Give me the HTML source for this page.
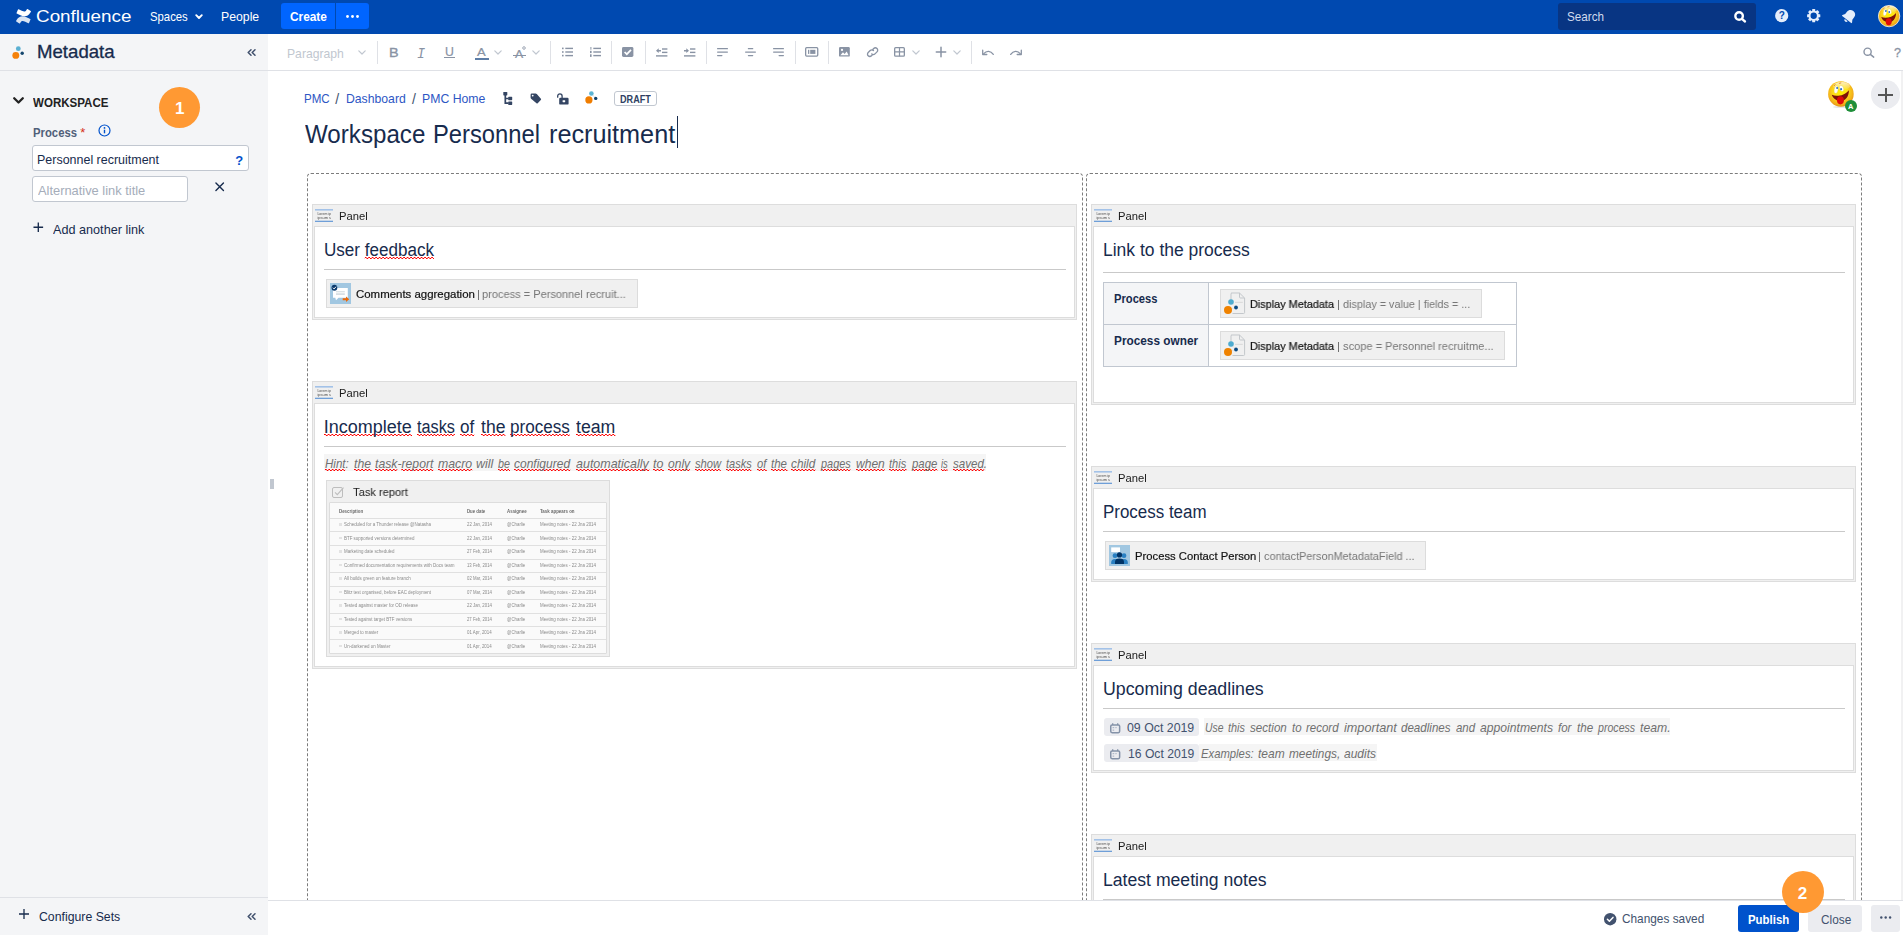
<!DOCTYPE html>
<html lang="en">
<head>
<meta charset="utf-8">
<title>Workspace Personnel recruitment</title>
<style>
*{box-sizing:border-box;margin:0;padding:0}
html,body{width:1903px;height:935px;overflow:hidden;background:#fff}
body{position:relative;font-family:"Liberation Sans",sans-serif;font-size:12.6px;color:#172b4d}
.abs{position:absolute}
.t{position:absolute;white-space:pre;line-height:1}
svg{position:absolute;overflow:visible}
#nav{position:absolute;left:0;top:0;width:1903px;height:34px;background:#0049b0}
#side{position:absolute;left:0;top:34px;width:268px;height:901px;background:#f4f5f7}
#tb{position:absolute;left:268px;top:34px;width:1635px;height:37px;background:#fff;border-bottom:1px solid #dfe1e6}
#bot{position:absolute;left:268px;top:900px;width:1635px;height:35px;background:#fff;border-top:1px solid #dfe1e6}
.sq,.sq2{background-image:linear-gradient(90deg,#f00 50%,rgba(255,0,0,0) 50%),linear-gradient(90deg,rgba(255,0,0,0) 50%,#f00 50%);background-size:3.7px 1.3px,3.7px 1.3px;background-repeat:repeat-x}
.sq{background-position:0 calc(100% - 2px),0 calc(100% - 1px)}
.sq2{background-position:0 calc(100% - 1px),0 100%}
</style>
</head>
<body>
<div id="nav">
<svg style="left:15.5px;top:8.5px" width="15" height="14.5" viewBox="0 0 32 31"><path fill="#fff" d="M1.2 23.6c-.3.5-.7 1.200-1 1.700a1 1 0 0 0 .35 1.400l6.700 4.100a1 1 0 0 0 1.400-.34c.27-.45.600-1 1-1.650 2.650-4.400 5.300-3.850 10.100-1.550l6.650 3.150a1 1 0 0 0 1.350-.5l3.200-7.200a1 1 0 0 0-.5-1.300c-1.400-.66-4.200-1.980-6.700-3.200C14.600 13.900 6.900 14.200 1.200 23.600z" opacity=".85"/><path fill="#fff" d="M30.800 7.400c.3-.5.700-1.200 1-1.700a1 1 0 0 0-.35-1.400L24.750.2a1 1 0 0 0-1.400.34c-.27.45-.6 1-1 1.650-2.650 4.400-5.300 3.850-10.100 1.550L5.600.6a1 1 0 0 0-1.350.5L1.050 8.300a1 1 0 0 0 .5 1.300c1.400.66 4.200 1.980 6.700 3.200 9.150 4.300 16.850 4 22.550-5.400z"/></svg>
<span class="t" style="left:36.20px;top:8.00px;font-size:17.3px;transform:scaleX(1.0920);transform-origin:0 0;color:#fff;">Confluence</span>
<span class="t" style="left:149.80px;top:11.00px;font-size:12.6px;transform:scaleX(0.8991);transform-origin:0 0;color:#fff;">Spaces</span>
<svg style="left:194.500px;top:14px" width="8" height="6" viewBox="0 0 8 6"><path d="M1.200 1.200 L4 4 L6.800 1.200" fill="none" stroke="#fff" stroke-width="1.900" stroke-linecap="round" stroke-linejoin="round"/></svg>
<span class="t" style="left:221.03px;top:11.00px;font-size:12.6px;transform:scaleX(0.9736);transform-origin:0 0;color:#fff;">People</span>
<div class="abs" style="left:281px;top:3px;width:54px;height:26px;background:#0065ff;border-radius:3px 0 0 3px"></div>
<div class="abs" style="left:336px;top:3px;width:33px;height:26px;background:#0065ff;border-radius:0 3px 3px 0"></div>
<span class="t" style="left:289.80px;top:11.00px;font-size:12.6px;font-weight:bold;transform:scaleX(0.9414);transform-origin:0 0;color:#fff;">Create</span>
<svg style="left:346px;top:14.5px" width="13" height="3" viewBox="0 0 13 3"><circle cx="1.5" cy="1.5" r="1.4" fill="#fff"/><circle cx="6.5" cy="1.5" r="1.4" fill="#fff"/><circle cx="11.5" cy="1.5" r="1.4" fill="#fff"/></svg>
<div class="abs" style="left:1558px;top:3px;width:198px;height:26.5px;background:#083583;border-radius:3px"></div>
<span class="t" style="left:1567.00px;top:11.00px;font-size:12.6px;transform:scaleX(0.9273);transform-origin:0 0;color:#d0dbee;">Search</span>
<svg style="left:1733px;top:10px" width="14" height="14" viewBox="0 0 14 14"><circle cx="6.100" cy="6.060" r="3.750" fill="none" stroke="#fff" stroke-width="2.400"/><path d="M8.900 8.900 L12 11.500" stroke="#fff" stroke-width="2.300" stroke-linecap="round"/></svg>
<svg style="left:1774.500px;top:9.200px" width="13.400" height="13.400" viewBox="0 0 13.400 13.400"><circle cx="6.700" cy="6.700" r="6.600" fill="#e4edfb"/><text x="6.700" y="10.300" text-anchor="middle" font-family="Liberation Sans, sans-serif" font-weight="bold" font-size="10" fill="#0049b0">?</text></svg>
<svg style="left:1807px;top:9.300px" width="13.400" height="13.400" viewBox="-6.700 -6.700 13.400 13.400"><circle r="4.200" fill="none" stroke="#e4edfb" stroke-width="2"/><g fill="#e4edfb"><rect x="-1.500" y="-6.600" width="3" height="3" rx=".5" transform="rotate(0)"/><rect x="-1.500" y="-6.600" width="3" height="3" rx=".5" transform="rotate(45)"/><rect x="-1.500" y="-6.600" width="3" height="3" rx=".5" transform="rotate(90)"/><rect x="-1.500" y="-6.600" width="3" height="3" rx=".5" transform="rotate(135)"/><rect x="-1.500" y="-6.600" width="3" height="3" rx=".5" transform="rotate(180)"/><rect x="-1.500" y="-6.600" width="3" height="3" rx=".5" transform="rotate(225)"/><rect x="-1.500" y="-6.600" width="3" height="3" rx=".5" transform="rotate(270)"/><rect x="-1.500" y="-6.600" width="3" height="3" rx=".5" transform="rotate(315)"/></g></svg>
<svg style="left:1841.500px;top:8.800px" width="14.500" height="14.500" viewBox="0 0 15 15"><g transform="rotate(38 7.500 7.500)" fill="#e4edfb"><path d="M7.500 .6c-2.900 0-4.700 2-4.700 4.700v3L1.200 10.800v1h12.600v-1L12.200 8.300v-3c0-2.700-1.800-4.700-4.700-4.700z"/><path d="M5.600 12.600a1.900 1.900 0 0 0 3.800 0z"/></g></svg>
<svg style="left:1877.80px;top:4.80px" width="22.2" height="22.2" viewBox="0 0 40 40"><defs><radialGradient id="ga" cx="48%" cy="42%" r="60%"><stop offset="0" stop-color="#fff200"/><stop offset=".45" stop-color="#fde01a"/><stop offset=".8" stop-color="#f4b21a"/><stop offset="1" stop-color="#e08a14"/></radialGradient><linearGradient id="gah" x1="0" y1="0" x2="0" y2="1"><stop offset="0" stop-color="#fff" stop-opacity=".75"/><stop offset="1" stop-color="#fff" stop-opacity="0"/></linearGradient></defs><circle cx="20" cy="20" r="19.3" fill="url(#ga)" stroke="#fff" stroke-width="1.300"/><ellipse cx="21" cy="8" rx="13" ry="6.500" fill="url(#gah)"/><ellipse cx="12.600" cy="13.400" rx="3" ry="5.800" fill="#fff" stroke="#d9b43a" stroke-width=".4" transform="rotate(10 12.600 13.400)"/><ellipse cx="21" cy="11.500" rx="3.100" ry="4.800" fill="#fff" stroke="#d9b43a" stroke-width=".4" transform="rotate(-20 21 11.500)"/><circle cx="14.200" cy="10.800" r="1.600" fill="#2f6fc4"/><circle cx="20.300" cy="12.600" r="1.600" fill="#2f6fc4"/><path d="M9.500 7.500 L11 5.500 M17.500 3.600 L20 3" stroke="#e0701a" stroke-width="1.200" stroke-linecap="round"/><path d="M5.800 21.500 C13 24.500 25.500 23 32.500 14.200 C32.500 24 27 31 19.500 31 C12 31 7.500 26.500 5.800 21.500z" fill="#7d1208"/><ellipse cx="19.300" cy="30" rx="5.400" ry="6.300" fill="#de0a0a"/></svg>
</div>
<div id="side"></div>
<svg style="left:12px;top:46px" width="12.5" height="13.0" viewBox="0 0 12.5 13"><circle cx="3.800" cy="9.400" r="3.450" fill="#f5820b"/><circle cx="6.300" cy="2.700" r="2.400" fill="#5ab0d2"/><circle cx="10.200" cy="7.300" r="1.700" fill="#14466e"/></svg>
<span class="t" style="left:36.85px;top:44.00px;font-size:17.8px;transform:scaleX(1.0471);transform-origin:0 0;color:#172b4d;-webkit-text-stroke:0.3px;">Metadata</span>
<svg style="left:247px;top:48.5px" width="9" height="7" viewBox="0 0 9 7"><path d="M4 .7 L1.200 3.500 L4 6.300 M8 .7 L5.200 3.500 L8 6.300" fill="none" stroke="#42526e" stroke-width="1.500" stroke-linecap="round" stroke-linejoin="round"/></svg>
<div class="abs" style="left:0px;top:70px;width:268px;height:1px;background:#dfe1e6"></div>
<svg style="left:12.5px;top:96.5px" width="11" height="7" viewBox="0 0 11 7"><path d="M1.200 1.200 L5.500 5.500 L9.800 1.200" fill="none" stroke="#222" stroke-width="2.300" stroke-linecap="round" stroke-linejoin="round"/></svg>
<span class="t" style="left:32.80px;top:96.00px;font-size:13.5px;font-weight:bold;transform:scaleX(0.8556);transform-origin:0 0;color:#222;">WORKSPACE</span>
<div class="abs" style="left:158.8px;top:86.7px;width:41.6px;height:41.6px;background:#ff9933;border-radius:50%"></div>
<span class="t" style="left:175.00px;top:100.00px;font-size:17px;font-weight:bold;color:#fff;">1</span>
<span class="t" style="left:32.70px;top:127.00px;font-size:12.6px;font-weight:bold;transform:scaleX(0.8979);transform-origin:0 0;color:#505f79;">Process</span>
<span class="t" style="left:80.30px;top:126.00px;font-size:13px;color:#d6301a;">*</span>
<svg style="left:98.400px;top:123.500px" width="13" height="13" viewBox="0 0 13 13"><circle cx="6.5" cy="6.5" r="5.500" fill="none" stroke="#0052cc" stroke-width="1.200"/><circle cx="6.500" cy="3.900" r=".9" fill="#0052cc"/><path d="M6.500 5.700 V9.300" stroke="#0052cc" stroke-width="1.400"/></svg>
<div class="abs" style="left:32px;top:145px;width:217px;height:26px;background:#fff;border:1px solid #c1c7d0;border-radius:3px"></div>
<span class="t" style="left:37.01px;top:154.00px;font-size:12.6px;transform:scaleX(0.9903);transform-origin:0 0;color:#172b4d;">Personnel recruitment</span>
<span class="t" style="left:235.30px;top:154.00px;font-size:13px;font-weight:bold;color:#0052cc;">?</span>
<div class="abs" style="left:32px;top:176px;width:156px;height:26px;background:#fff;border:1px solid #c1c7d0;border-radius:3px"></div>
<span class="t" style="left:38.00px;top:185.00px;font-size:12.6px;transform:scaleX(1.0211);transform-origin:0 0;color:#a5adba;">Alternative link title</span>
<svg style="left:214.700px;top:182.300px" width="9.400" height="9.400" viewBox="0 0 10 10"><path d="M1 1 L9 9 M9 1 L1 9" stroke="#172b4d" stroke-width="1.500" stroke-linecap="round"/></svg>
<svg style="left:33px;top:221.800px" width="10.600" height="10.600" viewBox="0 0 11 11"><path d="M5.500 .5 V10.500 M.5 5.500 H10.500" stroke="#172b4d" stroke-width="1.400"/></svg>
<span class="t" style="left:53.30px;top:224.00px;font-size:12.6px;transform:scaleX(1.0042);transform-origin:0 0;color:#172b4d;">Add another link</span>
<div class="abs" style="left:0px;top:897px;width:268px;height:1px;background:#dfe1e6"></div>
<svg style="left:19px;top:909px" width="10" height="10" viewBox="0 0 10 10"><path d="M5 0 V10 M0 5 H10" stroke="#172b4d" stroke-width="1.300"/></svg>
<span class="t" style="left:38.50px;top:911.00px;font-size:12.6px;transform:scaleX(0.9746);transform-origin:0 0;color:#172b4d;">Configure Sets</span>
<svg style="left:247px;top:912.5px" width="9" height="7" viewBox="0 0 9 7"><path d="M4 .7 L1.200 3.500 L4 6.300 M8 .7 L5.200 3.500 L8 6.300" fill="none" stroke="#42526e" stroke-width="1.500" stroke-linecap="round" stroke-linejoin="round"/></svg>
<div class="abs" style="left:270.4px;top:479px;width:1.2px;height:10px;background:#c1c7d0"></div>
<div class="abs" style="left:272.4px;top:479px;width:1.2px;height:10px;background:#c1c7d0"></div>
<div id="tb"></div>
<span class="t" style="left:286.63px;top:48.00px;font-size:12.6px;transform:scaleX(0.9670);transform-origin:0 0;color:#c1c7d0;">Paragraph</span>
<svg style="left:358px;top:50px" width="8" height="5" viewBox="0 0 8 5"><path d="M.8 .8 L4 4 L7.200 .8" fill="none" stroke="#c1c7d0" stroke-width="1.200" stroke-linecap="round" stroke-linejoin="round"/></svg>
<div class="abs" style="left:377px;top:41px;width:1px;height:23px;background:#dfe1e6"></div>
<span class="t" style="left:388.73px;top:46.00px;font-size:13.4px;transform:scaleX(1.0750);transform-origin:0 0;color:#8993a4;-webkit-text-stroke:0.35px;">B</span>
<span class="t" style="left:417.40px;top:47.00px;font-size:14.2px;font-style:italic;transform:scaleX(0.9556);transform-origin:0 0;color:#8993a4;font-family:'Liberation Mono',monospace;">I</span>
<span class="t" style="left:445.00px;top:46.00px;font-size:12.6px;transform:scaleX(0.9778);transform-origin:0 0;color:#8993a4;-webkit-text-stroke:0.2px;">U</span>
<div class="abs" style="left:444.3px;top:56.7px;width:10.4px;height:1.2px;background:#8993a4"></div>
<span class="t" style="left:477.40px;top:46.00px;font-size:11.6px;transform:scaleX(1.1250);transform-origin:0 0;color:#8993a4;-webkit-text-stroke:0.2px;">A</span>
<div class="abs" style="left:475.2px;top:58px;width:13.6px;height:2px;background:#5d7da6"></div>
<svg style="left:494px;top:50px" width="8" height="5" viewBox="0 0 8 5"><path d="M.8 .8 L4 4 L7.200 .8" fill="none" stroke="#c1c7d0" stroke-width="1.200" stroke-linecap="round" stroke-linejoin="round"/></svg>
<span class="t" style="left:515.30px;top:49.00px;font-size:11px;transform:scaleX(1.1125);transform-origin:0 0;color:#8993a4;-webkit-text-stroke:0.2px;">A</span>
<div class="abs" style="left:512.9px;top:54.5px;width:12.8px;height:1px;background:#8993a4"></div>
<svg style="left:522px;top:46px" width="4" height="4" viewBox="0 0 4 4"><circle cx="2" cy="2" r="1.300" fill="none" stroke="#8993a4" stroke-width=".8"/></svg>
<svg style="left:532px;top:50px" width="8" height="5" viewBox="0 0 8 5"><path d="M.8 .8 L4 4 L7.200 .8" fill="none" stroke="#c1c7d0" stroke-width="1.200" stroke-linecap="round" stroke-linejoin="round"/></svg>
<div class="abs" style="left:550px;top:41px;width:1px;height:23px;background:#dfe1e6"></div>
<svg style="left:562px;top:47px" width="11" height="10" viewBox="0 0 11 10"><g fill="#8993a4"><rect x="0" y=".6" width="1.600" height="1.600"/><rect x="0" y="4.200" width="1.600" height="1.600"/><rect x="0" y="7.800" width="1.600" height="1.600"/><rect x="3.300" y=".7" width="7.700" height="1.400"/><rect x="3.300" y="4.300" width="7.700" height="1.400"/><rect x="3.300" y="7.900" width="7.700" height="1.400"/></g></svg>
<svg style="left:589.500px;top:47px" width="11" height="10" viewBox="0 0 11 10"><g fill="#8993a4"><rect x=".4" y="0" width="1" height="2.700"/><rect x="0" y="3.800" width="1.600" height="2.300"/><rect x="0" y="7.300" width="1.600" height="2.600"/><rect x="3.300" y=".7" width="7.700" height="1.400"/><rect x="3.300" y="4.300" width="7.700" height="1.400"/><rect x="3.300" y="7.900" width="7.700" height="1.400"/></g></svg>
<div class="abs" style="left:611px;top:41px;width:1px;height:23px;background:#dfe1e6"></div>
<svg style="left:622.400px;top:47px" width="11.400" height="10" viewBox="0 0 11.400 10"><rect x="0" y="0" width="11.400" height="10" rx="1.500" fill="#8993a4"/><path d="M2.600 5 L4.800 7.200 L9 2.800" fill="none" stroke="#fff" stroke-width="1.700"/></svg>
<div class="abs" style="left:645px;top:41px;width:1px;height:23px;background:#dfe1e6"></div>
<svg style="left:655.700px;top:47.500px" width="11.400" height="9.500" viewBox="0 0 11.400 9.500"><g fill="#8993a4"><rect x="6" y=".3" width="5.400" height="1.400"/><rect x="6" y="3.700" width="5.400" height="1.400"/><rect x="0" y="7.200" width="11.400" height="1.400"/><path d="M0 2.700 L2.700 .3 V1.950 H5 V3.450 H2.700 V5.100z"/></g></svg>
<svg style="left:683.500px;top:47.500px" width="11.400" height="9.500" viewBox="0 0 11.400 9.500"><g fill="#8993a4"><rect x="6" y=".3" width="5.400" height="1.400"/><rect x="6" y="3.700" width="5.400" height="1.400"/><rect x="0" y="7.200" width="11.400" height="1.400"/><path d="M5 2.700 L2.300 .3 V1.950 H0 V3.450 H2.300 V5.100z"/></g></svg>
<div class="abs" style="left:706px;top:41px;width:1px;height:23px;background:#dfe1e6"></div>
<svg style="left:717px;top:48px" width="11" height="9" viewBox="0 0 11 9"><g fill="#8993a4"><rect x="0" y="0" width="11" height="1.300" rx=".6"/><rect x="0" y="3.400" width="11" height="1.300" rx=".6"/><rect x="0" y="6.900" width="5.500" height="1.300" rx=".6"/></g></svg>
<svg style="left:745px;top:48px" width="11" height="9" viewBox="0 0 11 9"><g fill="#8993a4"><rect x="2.800" y="0" width="5.500" height="1.300" rx=".6"/><rect x="0" y="3.400" width="11" height="1.300" rx=".6"/><rect x="2.800" y="6.900" width="5.500" height="1.300" rx=".6"/></g></svg>
<svg style="left:773px;top:48px" width="11" height="9" viewBox="0 0 11 9"><g fill="#8993a4"><rect x="0" y="0" width="11" height="1.300" rx=".6"/><rect x="0" y="3.400" width="11" height="1.300" rx=".6"/><rect x="5.500" y="6.900" width="5.500" height="1.300" rx=".6"/></g></svg>
<div class="abs" style="left:795px;top:41px;width:1px;height:23px;background:#dfe1e6"></div>
<svg style="left:804.900px;top:47.300px" width="13.400" height="9.700" viewBox="0 0 13.400 9.700"><rect x=".65" y=".65" width="12.100" height="8.400" rx="1" fill="none" stroke="#8993a4" stroke-width="1.300"/><rect x="3" y="2.800" width="1.300" height="4.100" fill="#8993a4"/><rect x="5.200" y="2.800" width="5.200" height="4.100" fill="#8993a4"/></svg>
<div class="abs" style="left:828px;top:41px;width:1px;height:23px;background:#dfe1e6"></div>
<svg style="left:839.300px;top:47.300px" width="10.800" height="9.600" viewBox="0 0 10.800 9.600"><rect width="10.800" height="9.600" rx="1.200" fill="#8993a4"/><circle cx="3" cy="2.900" r="1.100" fill="#fff"/><path d="M1.300 8.200 L4 5.300 L5.600 6.900 L7.700 4.400 L9.600 8.200z" fill="#fff"/></svg>
<svg style="left:867.200px;top:47px" width="11.200" height="10.400" viewBox="0 0 11.200 10.400"><g fill="none" stroke="#8993a4" stroke-width="1.350" stroke-linecap="round"><path d="M4.700 6.900 a2.300 2.300 0 0 0 3.300 0 l2 -2 a2.300 2.300 0 0 0 -3.300 -3.300 l-.9 .9"/><path d="M6.500 3.500 a2.300 2.300 0 0 0 -3.300 0 l-2 2 a2.300 2.300 0 0 0 3.300 3.300 l.9 -.9"/></g></svg>
<svg style="left:894px;top:47.300px" width="11" height="9.800" viewBox="0 0 11 9.800"><rect x=".65" y=".65" width="9.700" height="8.500" rx="1" fill="none" stroke="#8993a4" stroke-width="1.300"/><path d="M5.500 .6 V9.200 M.6 4.900 H10.400" stroke="#8993a4" stroke-width="1.200"/></svg>
<svg style="left:912px;top:50px" width="8" height="5" viewBox="0 0 8 5"><path d="M.8 .8 L4 4 L7.200 .8" fill="none" stroke="#c1c7d0" stroke-width="1.200" stroke-linecap="round" stroke-linejoin="round"/></svg>
<svg style="left:936px;top:47.300px" width="10" height="10" viewBox="0 0 10 10"><path d="M5 .3 V9.700 M.3 5 H9.700" stroke="#8993a4" stroke-width="1.500" stroke-linecap="round"/></svg>
<svg style="left:953px;top:50px" width="8" height="5" viewBox="0 0 8 5"><path d="M.8 .8 L4 4 L7.200 .8" fill="none" stroke="#c1c7d0" stroke-width="1.200" stroke-linecap="round" stroke-linejoin="round"/></svg>
<div class="abs" style="left:971px;top:41px;width:1px;height:23px;background:#dfe1e6"></div>
<svg style="left:981.500px;top:48.500px" width="12" height="7" viewBox="0 0 12 7"><path d="M1.800 4.700 C4.500 1.400 8.600 1.600 11.300 5.400" fill="none" stroke="#8993a4" stroke-width="1.300" stroke-linecap="round"/><path d="M.7 1.200 V5.500 H4.800" fill="none" stroke="#8993a4" stroke-width="1.300" stroke-linecap="round" stroke-linejoin="round"/></svg>
<svg style="left:1009.500px;top:48.500px" width="12" height="7" viewBox="0 0 12 7"><path d="M10.200 4.700 C7.500 1.400 3.400 1.600 .7 5.400" fill="none" stroke="#8993a4" stroke-width="1.300" stroke-linecap="round"/><path d="M11.300 1.200 V5.500 H7.200" fill="none" stroke="#8993a4" stroke-width="1.300" stroke-linecap="round" stroke-linejoin="round"/></svg>
<svg style="left:1863px;top:46.500px" width="11.500" height="11" viewBox="0 0 11.500 11"><circle cx="4.600" cy="4.700" r="3.600" fill="none" stroke="#8993a4" stroke-width="1.400"/><path d="M7.300 7.400 L10.700 10.100" stroke="#8993a4" stroke-width="1.500" stroke-linecap="round"/></svg>
<span class="t" style="left:1894.30px;top:46.00px;font-size:13.6px;transform:scaleX(0.9250);transform-origin:0 0;color:#8993a4;-webkit-text-stroke:0.3px;">?</span>
<span class="t" style="left:303.88px;top:93.00px;font-size:12.6px;transform:scaleX(0.9185);transform-origin:0 0;color:#2d56c4;">PMC</span>
<span class="t" style="left:335.20px;top:92.00px;font-size:14px;color:#42526e;">/</span>
<span class="t" style="left:345.93px;top:93.00px;font-size:12.6px;transform:scaleX(0.9702);transform-origin:0 0;color:#2d56c4;">Dashboard</span>
<span class="t" style="left:411.90px;top:92.00px;font-size:14px;color:#42526e;">/</span>
<span class="t" style="left:421.73px;top:93.00px;font-size:12.6px;transform:scaleX(0.9739);transform-origin:0 0;color:#2d56c4;">PMC Home</span>
<svg style="left:503px;top:92.300px" width="9.500" height="13" viewBox="0 0 9.500 13"><g fill="#344563"><rect x=".3" y="0" width="4" height="3.400" rx=".6"/><rect x="5.200" y="4.800" width="4" height="3.400" rx=".6"/><rect x="5.200" y="9.500" width="4" height="3.400" rx=".6"/></g><path d="M2.300 3 V11.200 H5.500 M2.300 6.500 H5.500" fill="none" stroke="#344563" stroke-width="1.700"/></svg>
<svg style="left:529.500px;top:93.300px" width="11.500" height="11" viewBox="0 0 11.500 11"><path d="M.6 1.800 Q.6 .6 1.800 .6 L5.600 .6 Q6.300 .6 6.800 1.100 L10.900 5.700 Q11.400 6.300 10.800 6.900 L7.700 10.300 Q7.100 10.900 6.500 10.300 L1.100 5.800 Q.6 5.300 .6 4.600z" fill="#344563"/><circle cx="2.700" cy="2.600" r=".9" fill="#fff"/></svg>
<svg style="left:557px;top:92.800px" width="11.700" height="11.700" viewBox="0 0 11.700 11.700"><rect x="2.200" y="4.800" width="9.400" height="6.800" rx="1.200" fill="#344563"/><rect x="5.600" y="7.200" width="2.600" height="2" rx=".4" fill="#fff"/><path d="M.7 4.200 V3 a2.200 2.200 0 0 1 4.400 0 V5" fill="none" stroke="#344563" stroke-width="1.300" stroke-linecap="round"/></svg>
<svg style="left:584px;top:91px" width="14" height="13" viewBox="0 0 14 13"><path d="M7.400 2.500 L11.700 7.400" stroke="#b7d6e4" stroke-width=".6"/><circle cx="4.900" cy="8.900" r="3.600" fill="#f07d00"/><circle cx="7.400" cy="2.500" r="2.300" fill="#5ab4d4"/><circle cx="11.700" cy="7.400" r="1.700" fill="#0f4069"/></svg>
<div class="abs" style="left:614px;top:91px;width:43px;height:15px;background:#fff;border:1px solid #c1c7d0;border-radius:3px"></div>
<span class="t" style="left:620.10px;top:95.00px;font-size:10px;font-weight:bold;transform:scaleX(0.9090);transform-origin:0 0;color:#2f3f63;">DRAFT</span>
<span class="t" style="left:304.50px;top:122.00px;font-size:25.6px;transform:scaleX(0.9434);transform-origin:0 0;color:#172b4d;">Workspace</span><span class="t" style="left:433.44px;top:122.00px;font-size:25.6px;transform:scaleX(0.9277);transform-origin:0 0;color:#172b4d;">Personnel</span><span class="t" style="left:548.61px;top:122.00px;font-size:25.6px;transform:scaleX(0.9859);transform-origin:0 0;color:#172b4d;">recruitment</span>
<div class="abs" style="left:677.3px;top:116px;width:1.2px;height:32px;background:#172b4d"></div>
<div class="abs" style="left:1833px;top:105.5px;width:15px;height:2px;background:#e6e6e6;border-radius:50%"></div>
<svg style="left:1827.60px;top:81.00px" width="25.8" height="25.8" viewBox="0 0 40 40"><defs><radialGradient id="gb" cx="48%" cy="42%" r="60%"><stop offset="0" stop-color="#fff200"/><stop offset=".45" stop-color="#fde01a"/><stop offset=".8" stop-color="#f4b21a"/><stop offset="1" stop-color="#e08a14"/></radialGradient><linearGradient id="gbh" x1="0" y1="0" x2="0" y2="1"><stop offset="0" stop-color="#fff" stop-opacity=".75"/><stop offset="1" stop-color="#fff" stop-opacity="0"/></linearGradient></defs><circle cx="20" cy="20" r="19.8" fill="url(#gb)"/><ellipse cx="21" cy="8" rx="13" ry="6.500" fill="url(#gbh)"/><ellipse cx="12.600" cy="13.400" rx="3" ry="5.800" fill="#fff" stroke="#d9b43a" stroke-width=".4" transform="rotate(10 12.600 13.400)"/><ellipse cx="21" cy="11.500" rx="3.100" ry="4.800" fill="#fff" stroke="#d9b43a" stroke-width=".4" transform="rotate(-20 21 11.500)"/><circle cx="14.200" cy="10.800" r="1.600" fill="#2f6fc4"/><circle cx="20.300" cy="12.600" r="1.600" fill="#2f6fc4"/><path d="M9.500 7.500 L11 5.500 M17.500 3.600 L20 3" stroke="#e0701a" stroke-width="1.200" stroke-linecap="round"/><path d="M5.800 21.500 C13 24.500 25.500 23 32.500 14.200 C32.500 24 27 31 19.500 31 C12 31 7.500 26.500 5.800 21.500z" fill="#7d1208"/><ellipse cx="19.300" cy="30" rx="5.400" ry="6.300" fill="#de0a0a"/></svg>
<div class="abs" style="left:1845px;top:99.9px;width:12.2px;height:12.2px;background:#1f8f3a;border-radius:50%"></div>
<span class="t" style="left:1848.20px;top:103.00px;font-size:8px;font-weight:bold;transform:scaleX(0.9333);transform-origin:0 0;color:#fff;">A</span>
<div class="abs" style="left:1871.2px;top:80.1px;width:28.7px;height:28.7px;background:#ebecf0;border-radius:50%"></div>
<svg style="left:1878px;top:88px" width="15" height="14" viewBox="0 0 15 14"><path d="M8 0 V14 M0 7 H15" stroke="#555" stroke-width="2"/></svg>
<div class="abs" style="left:1901px;top:71px;width:2px;height:829px;background:#f1f1f2"></div>
<div class="abs" style="left:307px;top:173px;width:776px;height:740px;border:1px dashed #7c7c7c;border-radius:4px"></div>
<div class="abs" style="left:1086px;top:173px;width:776px;height:740px;border:1px dashed #7c7c7c;border-radius:4px"></div>
<div class="abs" style="left:312px;top:204px;width:765px;height:116px;background:#f0f0f0;border:1px solid #ddd"></div><div class="abs" style="left:314px;top:226px;width:761px;height:92px;background:#fff;border:1px solid #ddd"></div><svg style="left:315px;top:209px;will-change:transform" width="18" height="13" viewBox="0 0 18 13"><rect x="0" y="0" width="18" height="1.600" fill="#a3c2e8"/><rect x="0" y="11.700" width="18" height="1.300" fill="#6f9fd8"/><g font-family="Liberation Sans, sans-serif" font-size="3.900" fill="#4a4a4a"><text x="2.400" y="5.700" textLength="13.600" lengthAdjust="spacingAndGlyphs">Lorem ip</text><text x="2.400" y="10.100" textLength="13.600" lengthAdjust="spacingAndGlyphs">ipsum s</text></g></svg><span class="t" style="left:339.00px;top:211.00px;font-size:10.8px;transform:scaleX(1.0398);transform-origin:0 0;color:#1a1a1a;will-change:transform;">Panel</span>
<span class="t" style="left:324.05px;top:241.00px;font-size:18px;transform:scaleX(0.9478);transform-origin:0 0;color:#172b4d;">User <span class="sq">feedback</span></span>
<div class="abs" style="left:324px;top:269px;width:742px;height:1px;background:#c9c9c9"></div>
<div class="abs" style="left:326px;top:279px;width:312px;height:29px;background:#f0f0f0;border:1px solid #dcdcdc"></div><svg style="left:330px;top:283px" width="21" height="21" viewBox="0 0 21 21"><rect width="21" height="21" fill="#a1c7e1"/><path d="M3 5 H17.800 V14.800 H8.500 L6 17.200 L5.300 14.800 H3z" fill="#fff"/><rect x="6" y="8.200" width="8.800" height="1.100" fill="#d3dce1"/><rect x="6" y="10.300" width="8.800" height="1.600" fill="#d3dce1"/><circle cx="4.400" cy="4.750" r="2.900" fill="#0c3b6e"/><path d="M2.900 4.700 L4.100 5.900 L6 3.700" fill="none" stroke="#fff" stroke-width="1"/><path d="M12.700 15.300 H16 V13.500 L19.200 16.300 L16 19.100 V17.300 H12.700z" fill="#ec6a0a"/></svg><span class="t" style="left:355.50px;top:289.00px;font-size:11.25px;transform:scaleX(1.0164);transform-origin:0 0;color:#111;-webkit-text-stroke:0.2px;will-change:transform;">Comments aggregation</span><span class="t" style="left:476.60px;top:289.00px;font-size:11.25px;color:#666;will-change:transform;">|</span><span class="t" style="left:482.00px;top:289.00px;font-size:11.25px;transform:scaleX(0.9809);transform-origin:0 0;color:#767676;will-change:transform;">process = Personnel recruit...</span>
<div class="abs" style="left:312px;top:381px;width:765px;height:288px;background:#f0f0f0;border:1px solid #ddd"></div><div class="abs" style="left:314px;top:403px;width:761px;height:264px;background:#fff;border:1px solid #ddd"></div><svg style="left:315px;top:386px;will-change:transform" width="18" height="13" viewBox="0 0 18 13"><rect x="0" y="0" width="18" height="1.600" fill="#a3c2e8"/><rect x="0" y="11.700" width="18" height="1.300" fill="#6f9fd8"/><g font-family="Liberation Sans, sans-serif" font-size="3.900" fill="#4a4a4a"><text x="2.400" y="5.700" textLength="13.600" lengthAdjust="spacingAndGlyphs">Lorem ip</text><text x="2.400" y="10.100" textLength="13.600" lengthAdjust="spacingAndGlyphs">ipsum s</text></g></svg><span class="t" style="left:339.00px;top:388.00px;font-size:10.8px;transform:scaleX(1.0398);transform-origin:0 0;color:#1a1a1a;will-change:transform;">Panel</span>
<span class="t" style="left:323.80px;top:418.00px;font-size:18px;color:#172b4d;"><span class="sq">Incomplete</span></span><span class="t" style="left:417.30px;top:418.00px;font-size:18px;transform:scaleX(0.9021);transform-origin:0 0;color:#172b4d;"><span class="sq">tasks</span></span><span class="t" style="left:460.40px;top:418.00px;font-size:18px;transform:scaleX(0.9494);transform-origin:0 0;color:#172b4d;"><span class="sq">of</span></span><span class="t" style="left:481.20px;top:418.00px;font-size:18px;transform:scaleX(0.9755);transform-origin:0 0;color:#172b4d;"><span class="sq">the</span></span><span class="t" style="left:510.35px;top:418.00px;font-size:18px;transform:scaleX(0.9496);transform-origin:0 0;color:#172b4d;"><span class="sq">process</span></span><span class="t" style="left:575.90px;top:418.00px;font-size:18px;transform:scaleX(0.9840);transform-origin:0 0;color:#172b4d;"><span class="sq">team</span></span>
<div class="abs" style="left:324px;top:446px;width:742px;height:1px;background:#c9c9c9"></div>
<div class="abs" style="left:324px;top:454px;width:662px;height:17px;background:#f5f5f5"></div>
<span class="t" style="left:325.00px;top:458.00px;font-size:12.6px;font-style:italic;transform:scaleX(0.9175);transform-origin:0 0;color:#707070;"><span class="sq2">Hint</span>:</span><span class="t" style="left:354.20px;top:458.00px;font-size:12.6px;font-style:italic;transform:scaleX(0.9770);transform-origin:0 0;color:#707070;"><span class="sq2">the</span></span><span class="t" style="left:375.00px;top:458.00px;font-size:12.6px;font-style:italic;transform:scaleX(0.9705);transform-origin:0 0;color:#707070;"><span class="sq2">task</span>-<span class="sq2">report</span></span><span class="t" style="left:437.90px;top:458.00px;font-size:12.6px;font-style:italic;transform:scaleX(0.9775);transform-origin:0 0;color:#707070;"><span class="sq2">macro</span></span><span class="t" style="left:475.80px;top:458.00px;font-size:12.6px;font-style:italic;transform:scaleX(0.9898);transform-origin:0 0;color:#707070;">will</span><span class="t" style="left:498.20px;top:458.00px;font-size:12.6px;font-style:italic;transform:scaleX(0.8569);transform-origin:0 0;color:#707070;"><span class="sq2">be</span></span><span class="t" style="left:514.40px;top:458.00px;font-size:12.6px;font-style:italic;transform:scaleX(0.9531);transform-origin:0 0;color:#707070;"><span class="sq2">configured</span></span><span class="t" style="left:575.50px;top:458.00px;font-size:12.6px;font-style:italic;transform:scaleX(0.9906);transform-origin:0 0;color:#707070;"><span class="sq2">automatically</span></span><span class="t" style="left:653.30px;top:458.00px;font-size:12.6px;font-style:italic;transform:scaleX(0.9906);transform-origin:0 0;color:#707070;"><span class="sq2">to</span></span><span class="t" style="left:667.90px;top:458.00px;font-size:12.6px;font-style:italic;transform:scaleX(0.9577);transform-origin:0 0;color:#707070;"><span class="sq2">only</span></span><span class="t" style="left:694.90px;top:458.00px;font-size:12.6px;font-style:italic;transform:scaleX(0.8909);transform-origin:0 0;color:#707070;"><span class="sq2">show</span></span><span class="t" style="left:726.20px;top:458.00px;font-size:12.6px;font-style:italic;transform:scaleX(0.8738);transform-origin:0 0;color:#707070;"><span class="sq2">tasks</span></span><span class="t" style="left:756.50px;top:458.00px;font-size:12.6px;font-style:italic;transform:scaleX(0.8914);transform-origin:0 0;color:#707070;"><span class="sq2">of</span></span><span class="t" style="left:770.90px;top:458.00px;font-size:12.6px;font-style:italic;transform:scaleX(0.9141);transform-origin:0 0;color:#707070;"><span class="sq2">the</span></span><span class="t" style="left:791.10px;top:458.00px;font-size:12.6px;font-style:italic;transform:scaleX(0.9369);transform-origin:0 0;color:#707070;"><span class="sq2">child</span></span><span class="t" style="left:820.87px;top:458.00px;font-size:12.6px;font-style:italic;transform:scaleX(0.8663);transform-origin:0 0;color:#707070;"><span class="sq2">pages</span></span><span class="t" style="left:855.50px;top:458.00px;font-size:12.6px;font-style:italic;transform:scaleX(0.9567);transform-origin:0 0;color:#707070;"><span class="sq2">when</span></span><span class="t" style="left:888.60px;top:458.00px;font-size:12.6px;font-style:italic;transform:scaleX(0.8768);transform-origin:0 0;color:#707070;"><span class="sq2">this</span></span><span class="t" style="left:911.50px;top:458.00px;font-size:12.6px;font-style:italic;transform:scaleX(0.9031);transform-origin:0 0;color:#707070;"><span class="sq2">page</span></span><span class="t" style="left:941.40px;top:458.00px;font-size:12.6px;font-style:italic;transform:scaleX(0.7451);transform-origin:0 0;color:#707070;"><span class="sq2">is</span></span><span class="t" style="left:952.80px;top:458.00px;font-size:12.6px;font-style:italic;transform:scaleX(0.9184);transform-origin:0 0;color:#707070;"><span class="sq2">saved</span>.</span>
<div class="abs" style="left:0;top:0;will-change:transform">
<div class="abs" style="left:326px;top:480px;width:284px;height:177px;background:#f0f0f0;border:1px solid #dcdcdc"></div>
<svg style="left:332px;top:485.500px" width="13" height="12.500" viewBox="0 0 13 12.500"><rect x=".5" y="1.500" width="10" height="10" rx="1.500" fill="none" stroke="#bdbdbd" stroke-width="1"/><path d="M3 6.300 L5.300 8.700 L11.500 1.700" fill="none" stroke="#bdbdbd" stroke-width="1.100"/></svg>
<span class="t" style="left:353.00px;top:487.00px;font-size:11.25px;transform:scaleX(0.9873);transform-origin:0 0;color:#1a1a1a;will-change:transform;">Task report</span>
<div class="abs" style="left:329px;top:502px;width:278px;height:152px;background:#fafafa;border:1px solid #ddd;border-radius:1px"></div>
<div class="abs" style="left:330px;top:517.5px;width:276px;height:0.8px;background:#e0e0e0"></div>
<div class="abs" style="left:330px;top:531.0px;width:276px;height:0.8px;background:#e0e0e0"></div>
<div class="abs" style="left:330px;top:544.5px;width:276px;height:0.8px;background:#e0e0e0"></div>
<div class="abs" style="left:330px;top:558.5px;width:276px;height:0.8px;background:#e0e0e0"></div>
<div class="abs" style="left:330px;top:572.0px;width:276px;height:0.8px;background:#e0e0e0"></div>
<div class="abs" style="left:330px;top:585.5px;width:276px;height:0.8px;background:#e0e0e0"></div>
<div class="abs" style="left:330px;top:599.0px;width:276px;height:0.8px;background:#e0e0e0"></div>
<div class="abs" style="left:330px;top:612.5px;width:276px;height:0.8px;background:#e0e0e0"></div>
<div class="abs" style="left:330px;top:625.5px;width:276px;height:0.8px;background:#e0e0e0"></div>
<div class="abs" style="left:330px;top:639.0px;width:276px;height:0.8px;background:#e0e0e0"></div>
<span class="t" style="left:338.90px;top:510.00px;font-size:4.5px;font-weight:bold;transform:scaleX(0.9758);transform-origin:0 0;color:#6a6a6a;">Description</span>
<span class="t" style="left:467.00px;top:510.00px;font-size:4.5px;font-weight:bold;transform:scaleX(0.9589);transform-origin:0 0;color:#6a6a6a;">Due date</span>
<span class="t" style="left:507.20px;top:510.00px;font-size:4.5px;font-weight:bold;transform:scaleX(0.9802);transform-origin:0 0;color:#6a6a6a;">Assignee</span>
<span class="t" style="left:539.90px;top:510.00px;font-size:4.5px;font-weight:bold;transform:scaleX(0.9822);transform-origin:0 0;color:#6a6a6a;">Task appears on</span>
<div class="abs" style="left:339.3px;top:523.1999999999999px;width:2.6px;height:2.6px;background:#e3e3e3"></div>
<span class="t" style="left:344.20px;top:523.00px;font-size:4.5px;transform:scaleX(0.9885);transform-origin:0 0;color:#8a8a8a;">Scheduled for a Thunder release @Natasha</span>
<span class="t" style="left:467.00px;top:523.00px;font-size:4.5px;transform:scaleX(0.9578);transform-origin:0 0;color:#8a8a8a;">22 Jan, 2014</span>
<span class="t" style="left:507.20px;top:523.00px;font-size:4.5px;transform:scaleX(0.9678);transform-origin:0 0;color:#8a8a8a;">@Charlie</span>
<span class="t" style="left:539.90px;top:523.00px;font-size:4.5px;transform:scaleX(0.9820);transform-origin:0 0;color:#8a8a8a;">Meeting notes - 22 Jna 2014</span>
<div class="abs" style="left:339.3px;top:536.6999999999999px;width:2.6px;height:2.6px;background:#e3e3e3"></div>
<span class="t" style="left:344.20px;top:537.00px;font-size:4.5px;transform:scaleX(0.9843);transform-origin:0 0;color:#8a8a8a;">BTF supported versions determined</span>
<span class="t" style="left:467.00px;top:537.00px;font-size:4.5px;transform:scaleX(0.9578);transform-origin:0 0;color:#8a8a8a;">22 Jan, 2014</span>
<span class="t" style="left:507.20px;top:537.00px;font-size:4.5px;transform:scaleX(0.9678);transform-origin:0 0;color:#8a8a8a;">@Charlie</span>
<span class="t" style="left:539.90px;top:537.00px;font-size:4.5px;transform:scaleX(0.9820);transform-origin:0 0;color:#8a8a8a;">Meeting notes - 22 Jna 2014</span>
<div class="abs" style="left:339.3px;top:550.1999999999999px;width:2.6px;height:2.6px;background:#e3e3e3"></div>
<span class="t" style="left:344.20px;top:550.00px;font-size:4.5px;transform:scaleX(0.9802);transform-origin:0 0;color:#8a8a8a;">Marketing date scheduled</span>
<span class="t" style="left:467.00px;top:550.00px;font-size:4.5px;transform:scaleX(0.9401);transform-origin:0 0;color:#8a8a8a;">27 Feb, 2014</span>
<span class="t" style="left:507.20px;top:550.00px;font-size:4.5px;transform:scaleX(0.9678);transform-origin:0 0;color:#8a8a8a;">@Charlie</span>
<span class="t" style="left:539.90px;top:550.00px;font-size:4.5px;transform:scaleX(0.9820);transform-origin:0 0;color:#8a8a8a;">Meeting notes - 22 Jna 2014</span>
<div class="abs" style="left:339.3px;top:563.6999999999999px;width:2.6px;height:2.6px;background:#e3e3e3"></div>
<span class="t" style="left:344.20px;top:564.00px;font-size:4.5px;transform:scaleX(0.9937);transform-origin:0 0;color:#8a8a8a;">Confirmed documentation requirements with Docs team</span>
<span class="t" style="left:467.00px;top:564.00px;font-size:4.5px;transform:scaleX(0.9401);transform-origin:0 0;color:#8a8a8a;">13 Feb, 2014</span>
<span class="t" style="left:507.20px;top:564.00px;font-size:4.5px;transform:scaleX(0.9678);transform-origin:0 0;color:#8a8a8a;">@Charlie</span>
<span class="t" style="left:539.90px;top:564.00px;font-size:4.5px;transform:scaleX(0.9820);transform-origin:0 0;color:#8a8a8a;">Meeting notes - 22 Jna 2014</span>
<div class="abs" style="left:339.3px;top:577.1999999999999px;width:2.6px;height:2.6px;background:#e3e3e3"></div>
<span class="t" style="left:344.20px;top:577.00px;font-size:4.5px;transform:scaleX(0.9898);transform-origin:0 0;color:#8a8a8a;">All builds green on feature branch</span>
<span class="t" style="left:467.00px;top:577.00px;font-size:4.5px;transform:scaleX(0.9490);transform-origin:0 0;color:#8a8a8a;">02 Mar, 2014</span>
<span class="t" style="left:507.20px;top:577.00px;font-size:4.5px;transform:scaleX(0.9678);transform-origin:0 0;color:#8a8a8a;">@Charlie</span>
<span class="t" style="left:539.90px;top:577.00px;font-size:4.5px;transform:scaleX(0.9820);transform-origin:0 0;color:#8a8a8a;">Meeting notes - 22 Jna 2014</span>
<div class="abs" style="left:339.3px;top:590.6999999999999px;width:2.6px;height:2.6px;background:#e3e3e3"></div>
<span class="t" style="left:344.20px;top:591.00px;font-size:4.5px;transform:scaleX(0.9860);transform-origin:0 0;color:#8a8a8a;">Blitz test organised, before EAC deployment</span>
<span class="t" style="left:467.00px;top:591.00px;font-size:4.5px;transform:scaleX(0.9490);transform-origin:0 0;color:#8a8a8a;">07 Mar, 2014</span>
<span class="t" style="left:507.20px;top:591.00px;font-size:4.5px;transform:scaleX(0.9678);transform-origin:0 0;color:#8a8a8a;">@Charlie</span>
<span class="t" style="left:539.90px;top:591.00px;font-size:4.5px;transform:scaleX(0.9820);transform-origin:0 0;color:#8a8a8a;">Meeting notes - 22 Jna 2014</span>
<div class="abs" style="left:339.3px;top:604.1999999999999px;width:2.6px;height:2.6px;background:#e3e3e3"></div>
<span class="t" style="left:344.20px;top:604.00px;font-size:4.5px;transform:scaleX(0.9916);transform-origin:0 0;color:#8a8a8a;">Tested against master for OD release</span>
<span class="t" style="left:467.00px;top:604.00px;font-size:4.5px;transform:scaleX(0.9578);transform-origin:0 0;color:#8a8a8a;">22 Jan, 2014</span>
<span class="t" style="left:507.20px;top:604.00px;font-size:4.5px;transform:scaleX(0.9678);transform-origin:0 0;color:#8a8a8a;">@Charlie</span>
<span class="t" style="left:539.90px;top:604.00px;font-size:4.5px;transform:scaleX(0.9820);transform-origin:0 0;color:#8a8a8a;">Meeting notes - 22 Jna 2014</span>
<div class="abs" style="left:339.3px;top:617.6999999999999px;width:2.6px;height:2.6px;background:#e3e3e3"></div>
<span class="t" style="left:344.20px;top:618.00px;font-size:4.5px;transform:scaleX(0.9803);transform-origin:0 0;color:#8a8a8a;">Tested against target BTF versions</span>
<span class="t" style="left:467.00px;top:618.00px;font-size:4.5px;transform:scaleX(0.9401);transform-origin:0 0;color:#8a8a8a;">27 Feb, 2014</span>
<span class="t" style="left:507.20px;top:618.00px;font-size:4.5px;transform:scaleX(0.9678);transform-origin:0 0;color:#8a8a8a;">@Charlie</span>
<span class="t" style="left:539.90px;top:618.00px;font-size:4.5px;transform:scaleX(0.9820);transform-origin:0 0;color:#8a8a8a;">Meeting notes - 22 Jna 2014</span>
<div class="abs" style="left:339.3px;top:631.1999999999999px;width:2.6px;height:2.6px;background:#e3e3e3"></div>
<span class="t" style="left:344.20px;top:631.00px;font-size:4.5px;transform:scaleX(0.9702);transform-origin:0 0;color:#8a8a8a;">Merged to master</span>
<span class="t" style="left:467.00px;top:631.00px;font-size:4.5px;transform:scaleX(0.9762);transform-origin:0 0;color:#8a8a8a;">01 Apr, 2014</span>
<span class="t" style="left:507.20px;top:631.00px;font-size:4.5px;transform:scaleX(0.9678);transform-origin:0 0;color:#8a8a8a;">@Charlie</span>
<span class="t" style="left:539.90px;top:631.00px;font-size:4.5px;transform:scaleX(0.9820);transform-origin:0 0;color:#8a8a8a;">Meeting notes - 22 Jna 2014</span>
<div class="abs" style="left:339.3px;top:644.6999999999999px;width:2.6px;height:2.6px;background:#e3e3e3"></div>
<span class="t" style="left:344.20px;top:645.00px;font-size:4.5px;transform:scaleX(0.9817);transform-origin:0 0;color:#8a8a8a;">Un-darkened on Master</span>
<span class="t" style="left:467.00px;top:645.00px;font-size:4.5px;transform:scaleX(0.9762);transform-origin:0 0;color:#8a8a8a;">01 Apr, 2014</span>
<span class="t" style="left:507.20px;top:645.00px;font-size:4.5px;transform:scaleX(0.9678);transform-origin:0 0;color:#8a8a8a;">@Charlie</span>
<span class="t" style="left:539.90px;top:645.00px;font-size:4.5px;transform:scaleX(0.9820);transform-origin:0 0;color:#8a8a8a;">Meeting notes - 22 Jna 2014</span>
</div>
<div class="abs" style="left:1091px;top:204px;width:765px;height:201px;background:#f0f0f0;border:1px solid #ddd"></div><div class="abs" style="left:1093px;top:226px;width:761px;height:177px;background:#fff;border:1px solid #ddd"></div><svg style="left:1094px;top:209px;will-change:transform" width="18" height="13" viewBox="0 0 18 13"><rect x="0" y="0" width="18" height="1.600" fill="#a3c2e8"/><rect x="0" y="11.700" width="18" height="1.300" fill="#6f9fd8"/><g font-family="Liberation Sans, sans-serif" font-size="3.900" fill="#4a4a4a"><text x="2.400" y="5.700" textLength="13.600" lengthAdjust="spacingAndGlyphs">Lorem ip</text><text x="2.400" y="10.100" textLength="13.600" lengthAdjust="spacingAndGlyphs">ipsum s</text></g></svg><span class="t" style="left:1118.00px;top:211.00px;font-size:10.8px;transform:scaleX(1.0398);transform-origin:0 0;color:#1a1a1a;will-change:transform;">Panel</span>
<span class="t" style="left:1103.03px;top:241.00px;font-size:18px;transform:scaleX(0.9715);transform-origin:0 0;color:#172b4d;">Link to the process</span>
<div class="abs" style="left:1103px;top:272px;width:742px;height:1px;background:#c9c9c9"></div>
<div class="abs" style="left:1103px;top:282px;width:414px;height:85px;background:#fff;border:1px solid #c1c7d0"></div>
<div class="abs" style="left:1104px;top:283px;width:105px;height:83px;background:#f4f5f7"></div>
<div class="abs" style="left:1104px;top:324px;width:412px;height:1px;background:#c1c7d0"></div>
<div class="abs" style="left:1208px;top:283px;width:1px;height:83px;background:#c1c7d0"></div>
<span class="t" style="left:1114.00px;top:293.00px;font-size:12.6px;font-weight:bold;transform:scaleX(0.8876);transform-origin:0 0;color:#172b4d;">Process</span>
<span class="t" style="left:1114.00px;top:335.00px;font-size:12.6px;font-weight:bold;transform:scaleX(0.9387);transform-origin:0 0;color:#172b4d;">Process owner</span>
<div class="abs" style="left:1220px;top:289px;width:262px;height:29px;background:#f0f0f0;border:1px solid #dcdcdc"></div><svg style="left:1224px;top:292px" width="22" height="22" viewBox="0 0 22 22"><path d="M7.500 1 H15.500 L20.600 6 V20.500 Q20.600 21.500 19.600 21.500 H8.500" fill="none" stroke="#c3c7cb" stroke-width="1"/><path d="M7 9 V2 Q7 1 8 1" fill="none" stroke="#c3c7cb" stroke-width="1"/><path d="M15.500 1 V5 Q15.500 6 16.500 6 H20.600" fill="none" stroke="#c3c7cb" stroke-width="1"/><rect x="11" y="9.900" width="7.800" height=".7" fill="#cfcfcf"/><path d="M7 10 L12 15.500 M4 18 L12 15.500" stroke="#dcdcdc" stroke-width=".6"/><circle cx="7" cy="10" r="2.800" fill="#4eabcf"/><circle cx="4" cy="18" r="4" fill="#ef8200"/><circle cx="12" cy="15.500" r="1.900" fill="#0b4a82"/></svg><span class="t" style="left:1250.00px;top:299.00px;font-size:11.25px;transform:scaleX(0.9662);transform-origin:0 0;color:#111;-webkit-text-stroke:0.2px;will-change:transform;">Display Metadata</span><span class="t" style="left:1337.20px;top:299.00px;font-size:11.25px;color:#666;will-change:transform;">|</span><span class="t" style="left:1342.60px;top:299.00px;font-size:11.25px;transform:scaleX(0.9619);transform-origin:0 0;color:#767676;will-change:transform;">display = value | fields = ...</span>
<div class="abs" style="left:1220px;top:331px;width:285px;height:29px;background:#f0f0f0;border:1px solid #dcdcdc"></div><svg style="left:1224px;top:334px" width="22" height="22" viewBox="0 0 22 22"><path d="M7.500 1 H15.500 L20.600 6 V20.500 Q20.600 21.500 19.600 21.500 H8.500" fill="none" stroke="#c3c7cb" stroke-width="1"/><path d="M7 9 V2 Q7 1 8 1" fill="none" stroke="#c3c7cb" stroke-width="1"/><path d="M15.500 1 V5 Q15.500 6 16.500 6 H20.600" fill="none" stroke="#c3c7cb" stroke-width="1"/><rect x="11" y="9.900" width="7.800" height=".7" fill="#cfcfcf"/><path d="M7 10 L12 15.500 M4 18 L12 15.500" stroke="#dcdcdc" stroke-width=".6"/><circle cx="7" cy="10" r="2.800" fill="#4eabcf"/><circle cx="4" cy="18" r="4" fill="#ef8200"/><circle cx="12" cy="15.500" r="1.900" fill="#0b4a82"/></svg><span class="t" style="left:1250.00px;top:341.00px;font-size:11.25px;transform:scaleX(0.9662);transform-origin:0 0;color:#111;-webkit-text-stroke:0.2px;will-change:transform;">Display Metadata</span><span class="t" style="left:1337.20px;top:341.00px;font-size:11.25px;color:#666;will-change:transform;">|</span><span class="t" style="left:1342.60px;top:341.00px;font-size:11.25px;transform:scaleX(0.9846);transform-origin:0 0;color:#767676;will-change:transform;">scope = Personnel recruitme...</span>
<div class="abs" style="left:1091px;top:466px;width:765px;height:116px;background:#f0f0f0;border:1px solid #ddd"></div><div class="abs" style="left:1093px;top:488px;width:761px;height:92px;background:#fff;border:1px solid #ddd"></div><svg style="left:1094px;top:471px;will-change:transform" width="18" height="13" viewBox="0 0 18 13"><rect x="0" y="0" width="18" height="1.600" fill="#a3c2e8"/><rect x="0" y="11.700" width="18" height="1.300" fill="#6f9fd8"/><g font-family="Liberation Sans, sans-serif" font-size="3.900" fill="#4a4a4a"><text x="2.400" y="5.700" textLength="13.600" lengthAdjust="spacingAndGlyphs">Lorem ip</text><text x="2.400" y="10.100" textLength="13.600" lengthAdjust="spacingAndGlyphs">ipsum s</text></g></svg><span class="t" style="left:1118.00px;top:473.00px;font-size:10.8px;transform:scaleX(1.0398);transform-origin:0 0;color:#1a1a1a;will-change:transform;">Panel</span>
<span class="t" style="left:1103.06px;top:503.00px;font-size:18px;transform:scaleX(0.9413);transform-origin:0 0;color:#172b4d;">Process team</span>
<div class="abs" style="left:1103px;top:531px;width:742px;height:1px;background:#c9c9c9"></div>
<div class="abs" style="left:1105px;top:541px;width:321px;height:29px;background:#f0f0f0;border:1px solid #dcdcdc"></div><svg style="left:1109px;top:545px" width="21" height="21" viewBox="0 0 21 21"><rect width="21" height="21" fill="#a1c7e1"/><rect x="2.200" y="2.400" width="8.800" height="4.700" fill="#fff"/><g fill="#2a80c2"><circle cx="6" cy="10.700" r="2.400"/><circle cx="15" cy="10.700" r="2.400"/><path d="M2.200 19 V17.500 Q2.200 14 6 14 Q9.500 14 9.500 17.500 V19z"/><path d="M11.500 19 V17.500 Q11.500 14 15 14 Q18.800 14 18.800 17.500 V19z"/></g><g fill="#003366"><circle cx="10.500" cy="9.900" r="2.600"/><path d="M6 19 V17 Q6 13.600 10.500 13.600 Q15 13.600 15 17 V19z"/></g></svg><span class="t" style="left:1134.70px;top:551.00px;font-size:11.25px;color:#111;-webkit-text-stroke:0.2px;will-change:transform;">Process Contact Person</span><span class="t" style="left:1258.30px;top:551.00px;font-size:11.25px;color:#666;will-change:transform;">|</span><span class="t" style="left:1263.70px;top:551.00px;font-size:11.25px;transform:scaleX(0.9673);transform-origin:0 0;color:#767676;will-change:transform;">contactPersonMetadataField ...</span>
<div class="abs" style="left:1091px;top:643px;width:765px;height:130px;background:#f0f0f0;border:1px solid #ddd"></div><div class="abs" style="left:1093px;top:665px;width:761px;height:106px;background:#fff;border:1px solid #ddd"></div><svg style="left:1094px;top:648px;will-change:transform" width="18" height="13" viewBox="0 0 18 13"><rect x="0" y="0" width="18" height="1.600" fill="#a3c2e8"/><rect x="0" y="11.700" width="18" height="1.300" fill="#6f9fd8"/><g font-family="Liberation Sans, sans-serif" font-size="3.900" fill="#4a4a4a"><text x="2.400" y="5.700" textLength="13.600" lengthAdjust="spacingAndGlyphs">Lorem ip</text><text x="2.400" y="10.100" textLength="13.600" lengthAdjust="spacingAndGlyphs">ipsum s</text></g></svg><span class="t" style="left:1118.00px;top:650.00px;font-size:10.8px;transform:scaleX(1.0398);transform-origin:0 0;color:#1a1a1a;will-change:transform;">Panel</span>
<span class="t" style="left:1103.01px;top:680.00px;font-size:18px;transform:scaleX(0.9852);transform-origin:0 0;color:#172b4d;">Upcoming deadlines</span>
<div class="abs" style="left:1103px;top:708px;width:742px;height:1px;background:#c9c9c9"></div>
<div class="abs" style="left:1104px;top:718px;width:95px;height:18px;background:#ebecf0;border-radius:3px"></div>
<svg style="left:1109.9px;top:722.8px" width="10.400" height="10.400" viewBox="0 0 10.400 10.400"><rect x=".75" y="1.900" width="8.900" height="7.750" rx="1.300" fill="none" stroke="#8492a8" stroke-width="1.500"/><path d="M2.700 .2 V2 M7.700 .2 V2" stroke="#8492a8" stroke-width="1.300"/><rect x="2.600" y="4" width="1.300" height="1.200" fill="#a9b3c4"/><rect x="4.600" y="4" width="2.400" height="1.200" fill="#c3cad6"/><rect x="2.600" y="6.600" width="1.600" height="1.100" fill="#a9b3c4"/></svg>
<span class="t" style="left:1127.00px;top:722.00px;font-size:12.6px;transform:scaleX(0.9795);transform-origin:0 0;color:#42526e;">09 Oct 2019</span>
<div class="abs" style="left:1203.9px;top:718.3px;width:466.1px;height:16.4px;background:#f5f5f5"></div>
<span class="t" style="left:1204.80px;top:722.00px;font-size:12.6px;font-style:italic;transform:scaleX(0.8262);transform-origin:0 0;color:#707070;">Use</span><span class="t" style="left:1227.70px;top:722.00px;font-size:12.6px;font-style:italic;transform:scaleX(0.8620);transform-origin:0 0;color:#707070;">this</span><span class="t" style="left:1250.40px;top:722.00px;font-size:12.6px;font-style:italic;transform:scaleX(0.9223);transform-origin:0 0;color:#707070;">section</span><span class="t" style="left:1291.50px;top:722.00px;font-size:12.6px;font-style:italic;transform:scaleX(0.9144);transform-origin:0 0;color:#707070;">to</span><span class="t" style="left:1305.70px;top:722.00px;font-size:12.6px;font-style:italic;transform:scaleX(0.9130);transform-origin:0 0;color:#707070;">record</span><span class="t" style="left:1343.80px;top:722.00px;font-size:12.6px;font-style:italic;transform:scaleX(1.0057);transform-origin:0 0;color:#707070;">important</span><span class="t" style="left:1401.00px;top:722.00px;font-size:12.6px;font-style:italic;transform:scaleX(0.9191);transform-origin:0 0;color:#707070;">deadlines</span><span class="t" style="left:1455.60px;top:722.00px;font-size:12.6px;font-style:italic;transform:scaleX(0.9088);transform-origin:0 0;color:#707070;">and</span><span class="t" style="left:1480.00px;top:722.00px;font-size:12.6px;font-style:italic;transform:scaleX(0.9657);transform-origin:0 0;color:#707070;">appointments</span><span class="t" style="left:1558.00px;top:722.00px;font-size:12.6px;font-style:italic;transform:scaleX(0.9160);transform-origin:0 0;color:#707070;">for</span><span class="t" style="left:1576.60px;top:722.00px;font-size:12.6px;font-style:italic;transform:scaleX(0.9256);transform-origin:0 0;color:#707070;">the</span><span class="t" style="left:1598.04px;top:722.00px;font-size:12.6px;font-style:italic;transform:scaleX(0.8428);transform-origin:0 0;color:#707070;">process</span><span class="t" style="left:1640.40px;top:722.00px;font-size:12.6px;font-style:italic;transform:scaleX(0.9701);transform-origin:0 0;color:#707070;">team.</span>
<div class="abs" style="left:1199px;top:744.2px;width:178px;height:16.7px;background:#f5f5f5"></div>
<div class="abs" style="left:1104px;top:744px;width:95px;height:18px;background:#ebecf0;border-radius:3px"></div>
<svg style="left:1109.9px;top:748.8px" width="10.400" height="10.400" viewBox="0 0 10.400 10.400"><rect x=".75" y="1.900" width="8.900" height="7.750" rx="1.300" fill="none" stroke="#8492a8" stroke-width="1.500"/><path d="M2.700 .2 V2 M7.700 .2 V2" stroke="#8492a8" stroke-width="1.300"/><rect x="2.600" y="4" width="1.300" height="1.200" fill="#a9b3c4"/><rect x="4.600" y="4" width="2.400" height="1.200" fill="#c3cad6"/><rect x="2.600" y="6.600" width="1.600" height="1.100" fill="#a9b3c4"/></svg>
<span class="t" style="left:1128.00px;top:748.00px;font-size:12.6px;transform:scaleX(0.9649);transform-origin:0 0;color:#42526e;">16 Oct 2019</span>
<span class="t" style="left:1200.70px;top:748.00px;font-size:12.6px;font-style:italic;transform:scaleX(0.8955);transform-origin:0 0;color:#707070;">Examples:</span><span class="t" style="left:1257.60px;top:748.00px;font-size:12.6px;font-style:italic;transform:scaleX(0.9525);transform-origin:0 0;color:#707070;">team</span><span class="t" style="left:1288.50px;top:748.00px;font-size:12.6px;font-style:italic;transform:scaleX(0.9371);transform-origin:0 0;color:#707070;">meetings,</span><span class="t" style="left:1343.80px;top:748.00px;font-size:12.6px;font-style:italic;transform:scaleX(0.9531);transform-origin:0 0;color:#707070;">audits</span>
<div class="abs" style="left:1091px;top:834px;width:765px;height:130px;background:#f0f0f0;border:1px solid #ddd"></div><div class="abs" style="left:1093px;top:856px;width:761px;height:106px;background:#fff;border:1px solid #ddd"></div><svg style="left:1094px;top:839px;will-change:transform" width="18" height="13" viewBox="0 0 18 13"><rect x="0" y="0" width="18" height="1.600" fill="#a3c2e8"/><rect x="0" y="11.700" width="18" height="1.300" fill="#6f9fd8"/><g font-family="Liberation Sans, sans-serif" font-size="3.900" fill="#4a4a4a"><text x="2.400" y="5.700" textLength="13.600" lengthAdjust="spacingAndGlyphs">Lorem ip</text><text x="2.400" y="10.100" textLength="13.600" lengthAdjust="spacingAndGlyphs">ipsum s</text></g></svg><span class="t" style="left:1118.00px;top:841.00px;font-size:10.8px;transform:scaleX(1.0398);transform-origin:0 0;color:#1a1a1a;will-change:transform;">Panel</span>
<span class="t" style="left:1102.82px;top:871.00px;font-size:18px;transform:scaleX(0.9789);transform-origin:0 0;color:#172b4d;">Latest meeting notes</span>
<div class="abs" style="left:1103px;top:899px;width:742px;height:1px;background:#c9c9c9"></div>
<div id="bot"></div>
<svg style="left:1604px;top:913px" width="12.400" height="12.400" viewBox="0 0 12.400 12.400"><circle cx="6.200" cy="6.200" r="6.200" fill="#42526e"/><path d="M3.400 6.300 L5.400 8.300 L9 4.400" fill="none" stroke="#fff" stroke-width="1.500" stroke-linecap="round" stroke-linejoin="round"/></svg>
<span class="t" style="left:1622.20px;top:913.00px;font-size:12.6px;transform:scaleX(0.9393);transform-origin:0 0;color:#42526e;">Changes saved</span>
<div class="abs" style="left:1738px;top:905px;width:61px;height:27px;background:#0052cc;border-radius:3px"></div>
<span class="t" style="left:1748.40px;top:914.00px;font-size:12.6px;font-weight:bold;transform:scaleX(0.9065);transform-origin:0 0;color:#fff;">Publish</span>
<div class="abs" style="left:1808px;top:905px;width:54px;height:27px;background:#ebecf0;border-radius:3px"></div>
<span class="t" style="left:1820.80px;top:914.00px;font-size:12.6px;transform:scaleX(0.9381);transform-origin:0 0;color:#42526e;">Close</span>
<div class="abs" style="left:1871px;top:905px;width:29px;height:27px;background:#ebecf0;border-radius:3px"></div>
<svg style="left:1879.500px;top:916px" width="12" height="3" viewBox="0 0 12 3"><circle cx="1.300" cy="1.500" r="1.200" fill="#42526e"/><circle cx="5.700" cy="1.500" r="1.200" fill="#42526e"/><circle cx="10.100" cy="1.500" r="1.200" fill="#42526e"/></svg>
<div class="abs" style="left:1782px;top:871px;width:42px;height:42px;background:#ff9933;border-radius:50%"></div>
<span class="t" style="left:1797.80px;top:885.00px;font-size:17px;font-weight:bold;color:#fff;">2</span>
</body>
</html>
